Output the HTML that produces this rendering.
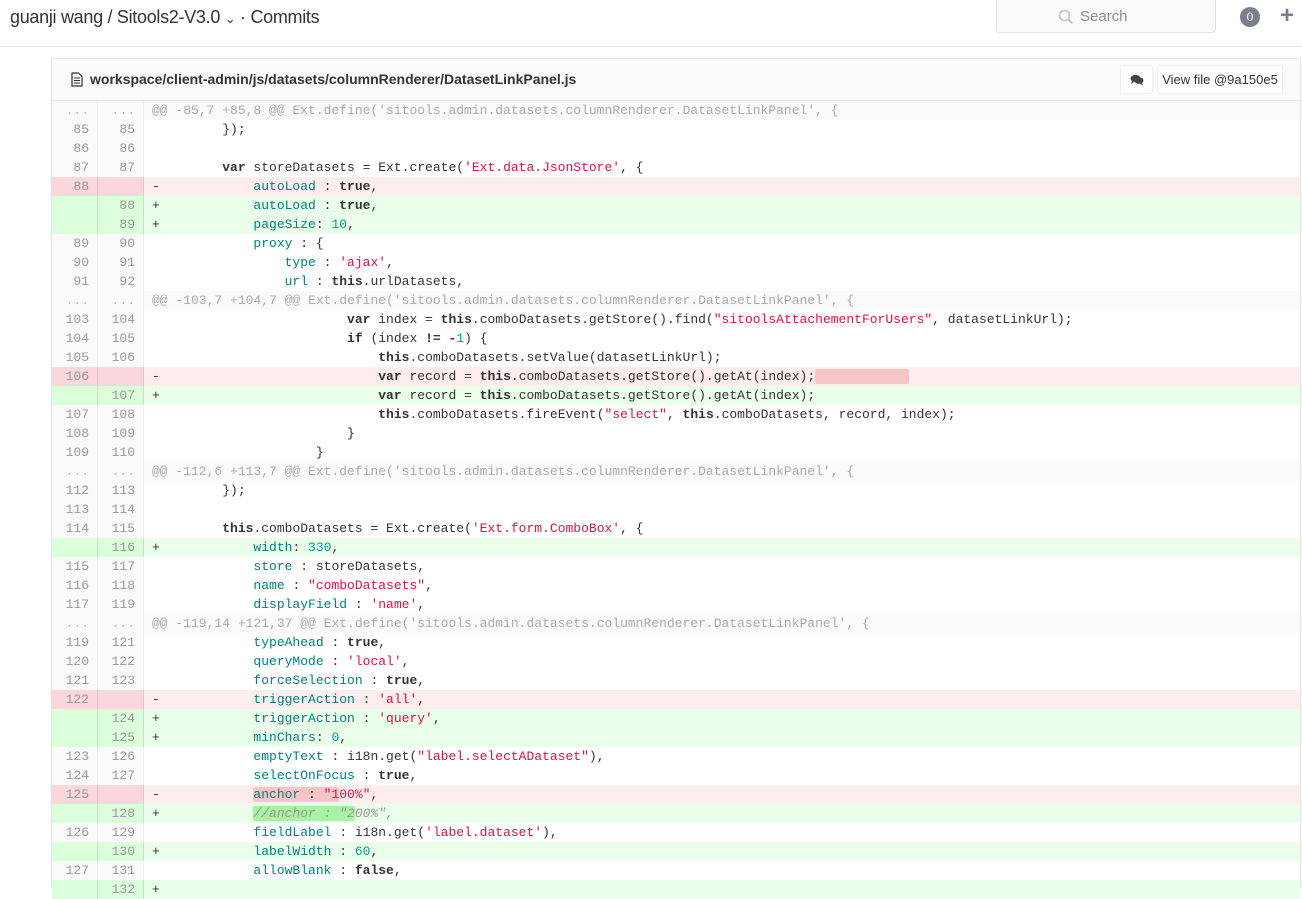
<!DOCTYPE html>
<html><head><meta charset="utf-8">
<style>
*{margin:0;padding:0;box-sizing:border-box}
body{width:1302px;height:884px;overflow:hidden;background:#fff;font-family:"Liberation Sans",sans-serif;position:relative}
.top{position:absolute;left:0;top:0;width:1302px;height:47px;border-bottom:1px solid #e5e5e5;background:#fff}
.title{position:absolute;left:10px;top:7px;font-size:18px;color:#333;letter-spacing:-0.3px}
.search{position:absolute;left:996px;top:0;width:220px;height:33px;border:1px solid #e3e3e3;border-top:none;border-radius:0 0 4px 4px;background:#fafafa;color:#8a8f99;font-size:15px}
.search span{position:absolute;left:83px;top:8px}
.badge{position:absolute;left:1240px;top:7px;width:20px;height:20px;border-radius:10px;background:#7a808b;color:#fff;font-size:12px;text-align:center;line-height:20px}
.plus{position:absolute;left:1280px;top:2px;font-size:24px;font-weight:bold;color:#7a808b}
.panel{position:absolute;left:51px;top:58px;width:1250px;height:830px;border:1px solid #e5e5e5;border-bottom:none}
.head{position:absolute;left:0;top:0;width:100%;height:42px;background:#fafafa;border-bottom:1px solid #e5e5e5}
.fname{position:absolute;left:38px;top:12px;font-size:14px;font-weight:bold;color:#333}
.ficon{position:absolute;left:19px;top:13px}
.cbtn{position:absolute;left:1068px;top:6px;width:33px;height:29px;border:1px solid #eee;background:#fff;border-radius:3px}
.vbtn{position:absolute;left:1105px;top:6px;width:126px;height:29px;border:1px solid #eee;background:#fff;border-radius:3px;font-size:13px;color:#333;text-align:center;line-height:27px}
.rows{position:absolute;left:0;top:42px;width:100%}
.r{height:19px;display:flex;font-family:"Liberation Mono",monospace;font-size:13px;line-height:19px;color:#333}
.n{width:46px;text-align:right;padding-right:8px;color:#999;background:#fafafa;border-right:1px solid #f0f0f0;flex:none}
.c{padding-left:8px;white-space:pre;flex:1}
.h .n{color:#bbb}.h .c{background:#fafafa;color:#aaa}
.d .n{background:#f9d7dc;border-right-color:#f1c0c6;color:#999}.d .c{background:#ffecec}
.a .n{background:#dbffdb;border-right-color:#c1e9c1}.a .c{background:#eaffea}
.k{color:#008080}.s{color:#d14}.b{font-weight:bold}.m{color:#099}
.hd{background:#f6c6c6;border-radius:2px}.ha{background:#a6f3a6;border-radius:2px}
.cm{color:#998;font-style:italic}
</style></head><body>
<div class="top">
<div class="title">guanji wang / Sitools2-V3.0 <span style="font-size:13px">&#8964;</span> · Commits</div>
<div class="search"><svg style="position:absolute;left:61px;top:9px" width="16" height="16" viewBox="0 0 16 16"><circle cx="6.5" cy="6.5" r="5" fill="none" stroke="#c5c8cd" stroke-width="1.8"/><line x1="10" y1="10" x2="14.5" y2="14.5" stroke="#c5c8cd" stroke-width="2"/></svg><span>Search</span></div>
<div class="badge">0</div>
<div class="plus">+</div>
</div>
<div class="panel">
<div class="head">
<svg class="ficon" width="12" height="15" viewBox="0 0 12 15"><path d="M1 1h6.5l3.5 3.5V14H1z" fill="none" stroke="#333" stroke-width="1.2"/><path d="M3 6h6M3 8.5h6M3 11h6" stroke="#333" stroke-width="1"/></svg>
<div class="fname">workspace/client-admin/js/datasets/columnRenderer/DatasetLinkPanel.js</div>
<div class="cbtn"><svg style="position:absolute;left:9px;top:8px" width="14" height="12" viewBox="0 0 14 12"><ellipse cx="5.5" cy="4.5" rx="5" ry="3.6" fill="#444"/><path d="M2 7l-1 3 3-2z" fill="#444"/><ellipse cx="9" cy="6.5" rx="4.5" ry="3.3" fill="#444"/><path d="M12 9l1 2.5-3-1.5z" fill="#444"/></svg></div>
<div class="vbtn">View file @9a150e5</div>
</div>
<div class="rows">
<div class="r h"><div class="n">...</div><div class="n">...</div><div class="c">@@ -85,7 +85,8 @@ Ext.define('sitools.admin.datasets.columnRenderer.DatasetLinkPanel', {</div></div>
<div class="r"><div class="n">85</div><div class="n">85</div><div class="c">         });</div></div>
<div class="r"><div class="n">86</div><div class="n">86</div><div class="c"> </div></div>
<div class="r"><div class="n">87</div><div class="n">87</div><div class="c">         <span class="b">var</span> storeDatasets = Ext.create(<span class="s">'Ext.data.JsonStore'</span>, {</div></div>
<div class="r d"><div class="n">88</div><div class="n"></div><div class="c">-            <span class="k">autoLoad</span> : <span class="b">true</span>,</div></div>
<div class="r a"><div class="n"></div><div class="n">88</div><div class="c">+            <span class="k">autoLoad</span> : <span class="b">true</span>,</div></div>
<div class="r a"><div class="n"></div><div class="n">89</div><div class="c">+            <span class="k">pageSize</span>: <span class="m">10</span>,</div></div>
<div class="r"><div class="n">89</div><div class="n">90</div><div class="c">             <span class="k">proxy</span> : {</div></div>
<div class="r"><div class="n">90</div><div class="n">91</div><div class="c">                 <span class="k">type</span> : <span class="s">'ajax'</span>,</div></div>
<div class="r"><div class="n">91</div><div class="n">92</div><div class="c">                 <span class="k">url</span> : <span class="b">this</span>.urlDatasets,</div></div>
<div class="r h"><div class="n">...</div><div class="n">...</div><div class="c">@@ -103,7 +104,7 @@ Ext.define('sitools.admin.datasets.columnRenderer.DatasetLinkPanel', {</div></div>
<div class="r"><div class="n">103</div><div class="n">104</div><div class="c">                         <span class="b">var</span> index = <span class="b">this</span>.comboDatasets.getStore().find(<span class="s">"sitoolsAttachementForUsers"</span>, datasetLinkUrl);</div></div>
<div class="r"><div class="n">104</div><div class="n">105</div><div class="c">                         <span class="b">if</span> (index <span class="b">!=</span> <span class="b">-</span><span class="m">1</span>) {</div></div>
<div class="r"><div class="n">105</div><div class="n">106</div><div class="c">                             <span class="b">this</span>.comboDatasets.setValue(datasetLinkUrl);</div></div>
<div class="r d"><div class="n">106</div><div class="n"></div><div class="c">-                            <span class="b">var</span> record = <span class="b">this</span>.comboDatasets.getStore().getAt(index);<span class="hd">            </span></div></div>
<div class="r a"><div class="n"></div><div class="n">107</div><div class="c">+                            <span class="b">var</span> record = <span class="b">this</span>.comboDatasets.getStore().getAt(index);</div></div>
<div class="r"><div class="n">107</div><div class="n">108</div><div class="c">                             <span class="b">this</span>.comboDatasets.fireEvent(<span class="s">"select"</span>, <span class="b">this</span>.comboDatasets, record, index);</div></div>
<div class="r"><div class="n">108</div><div class="n">109</div><div class="c">                         }</div></div>
<div class="r"><div class="n">109</div><div class="n">110</div><div class="c">                     }</div></div>
<div class="r h"><div class="n">...</div><div class="n">...</div><div class="c">@@ -112,6 +113,7 @@ Ext.define('sitools.admin.datasets.columnRenderer.DatasetLinkPanel', {</div></div>
<div class="r"><div class="n">112</div><div class="n">113</div><div class="c">         });</div></div>
<div class="r"><div class="n">113</div><div class="n">114</div><div class="c"> </div></div>
<div class="r"><div class="n">114</div><div class="n">115</div><div class="c">         <span class="b">this</span>.comboDatasets = Ext.create(<span class="s">'Ext.form.ComboBox'</span>, {</div></div>
<div class="r a"><div class="n"></div><div class="n">116</div><div class="c">+            <span class="k">width</span>: <span class="m">330</span>,</div></div>
<div class="r"><div class="n">115</div><div class="n">117</div><div class="c">             <span class="k">store</span> : storeDatasets,</div></div>
<div class="r"><div class="n">116</div><div class="n">118</div><div class="c">             <span class="k">name</span> : <span class="s">"comboDatasets"</span>,</div></div>
<div class="r"><div class="n">117</div><div class="n">119</div><div class="c">             <span class="k">displayField</span> : <span class="s">'name'</span>,</div></div>
<div class="r h"><div class="n">...</div><div class="n">...</div><div class="c">@@ -119,14 +121,37 @@ Ext.define('sitools.admin.datasets.columnRenderer.DatasetLinkPanel', {</div></div>
<div class="r"><div class="n">119</div><div class="n">121</div><div class="c">             <span class="k">typeAhead</span> : <span class="b">true</span>,</div></div>
<div class="r"><div class="n">120</div><div class="n">122</div><div class="c">             <span class="k">queryMode</span> : <span class="s">'local'</span>,</div></div>
<div class="r"><div class="n">121</div><div class="n">123</div><div class="c">             <span class="k">forceSelection</span> : <span class="b">true</span>,</div></div>
<div class="r d"><div class="n">122</div><div class="n"></div><div class="c">-            <span class="k">triggerAction</span> : <span class="s">'all'</span>,</div></div>
<div class="r a"><div class="n"></div><div class="n">124</div><div class="c">+            <span class="k">triggerAction</span> : <span class="s">'query'</span>,</div></div>
<div class="r a"><div class="n"></div><div class="n">125</div><div class="c">+            <span class="k">minChars</span>: <span class="m">0</span>,</div></div>
<div class="r"><div class="n">123</div><div class="n">126</div><div class="c">             <span class="k">emptyText</span> : i18n.get(<span class="s">"label.selectADataset"</span>),</div></div>
<div class="r"><div class="n">124</div><div class="n">127</div><div class="c">             <span class="k">selectOnFocus</span> : <span class="b">true</span>,</div></div>
<div class="r d"><div class="n">125</div><div class="n"></div><div class="c">-            <span class="hd"><span class="k">anchor</span> : <span class="s">"1</span></span><span class="s">00%"</span>,</div></div>
<div class="r a"><div class="n"></div><div class="n">128</div><div class="c">+            <span class="cm"><span class="ha">//anchor : "2</span>00%",</span></div></div>
<div class="r"><div class="n">126</div><div class="n">129</div><div class="c">             <span class="k">fieldLabel</span> : i18n.get(<span class="s">'label.dataset'</span>),</div></div>
<div class="r a"><div class="n"></div><div class="n">130</div><div class="c">+            <span class="k">labelWidth</span> : <span class="m">60</span>,</div></div>
<div class="r"><div class="n">127</div><div class="n">131</div><div class="c">             <span class="k">allowBlank</span> : <span class="b">false</span>,</div></div>
<div class="r a"><div class="n"></div><div class="n">132</div><div class="c">+ </div></div>
</div>
</div>
</body></html>
